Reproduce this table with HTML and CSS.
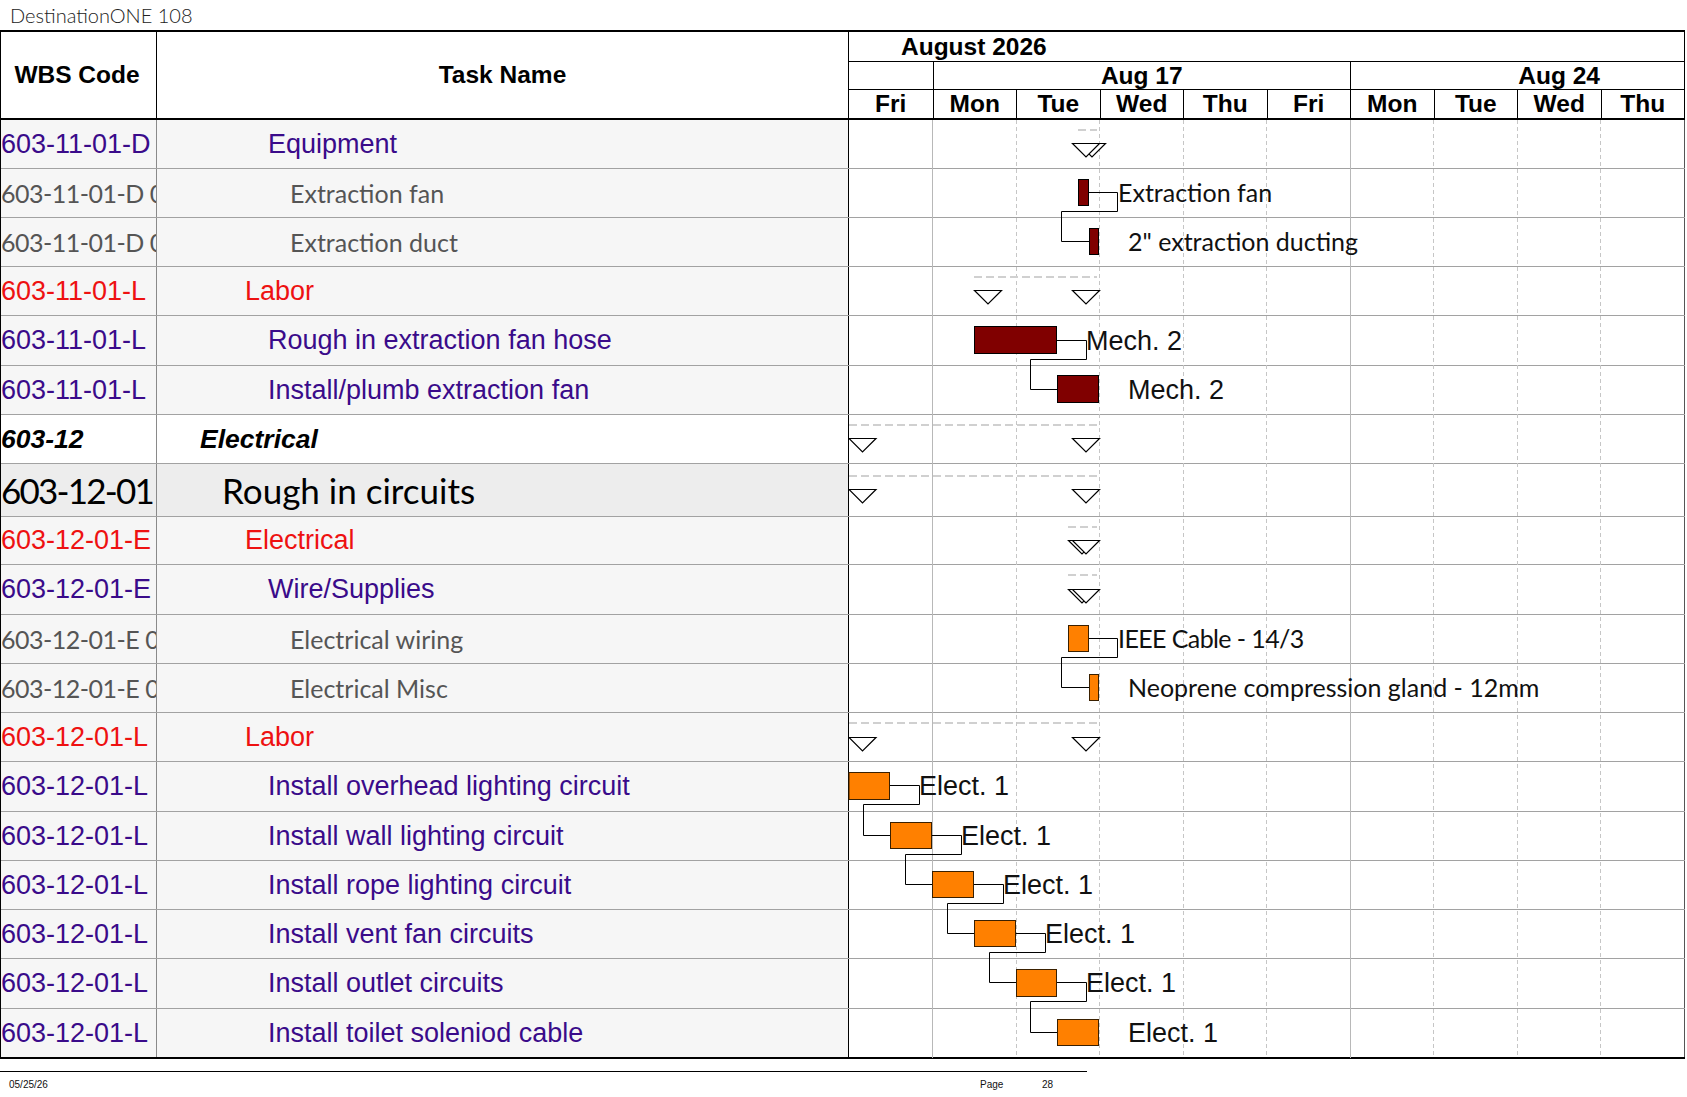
FILE: index.html
```html
<!DOCTYPE html>
<html lang="en">
<head>
<meta charset="utf-8">
<title>DestinationONE 108</title>
<link rel="stylesheet" href="styles.css">
</head>
<body>
<div class="title">DestinationONE 108</div>
<div class="sheet">
  <div class="head">
    <div class="h-wbs">WBS Code</div>
    <div class="h-task">Task Name</div>
    <div class="h-chart">
      <div class="h-month">August 2026</div>
      <div class="h-weeks">
        <div class="wk s1"></div>
        <div class="wk s5">Aug 17</div>
        <div class="wk s4 clip"><span>Aug 24</span></div>
      </div>
      <div class="h-days">
        <div class="day">Fri</div><div class="day">Mon</div><div class="day">Tue</div><div class="day">Wed</div><div class="day">Thu</div>
        <div class="day">Fri</div><div class="day">Mon</div><div class="day">Tue</div><div class="day">Wed</div><div class="day">Thu</div>
      </div>
    </div>
  </div>
  <div class="body">
    <div class="row"><div class="wbs t-blue">603-11-01-D</div><div class="task t-blue i4">Equipment</div><div class="gc"></div></div>
    <div class="row"><div class="wbs t-gray">603-11-01-D 01</div><div class="task t-gray i5">Extraction fan</div><div class="gc"></div></div>
    <div class="row"><div class="wbs t-gray">603-11-01-D 02</div><div class="task t-gray i5">Extraction duct</div><div class="gc"></div></div>
    <div class="row"><div class="wbs t-red">603-11-01-L</div><div class="task t-red i3">Labor</div><div class="gc"></div></div>
    <div class="row h50"><div class="wbs t-blue">603-11-01-L</div><div class="task t-blue i4">Rough in extraction fan hose</div><div class="gc"></div></div>
    <div class="row"><div class="wbs t-blue">603-11-01-L</div><div class="task t-blue i4">Install/plumb extraction fan</div><div class="gc"></div></div>
    <div class="row plain"><div class="wbs t-bold">603-12</div><div class="task t-bold i1">Electrical</div><div class="gc"></div></div>
    <div class="row ric"><div class="wbs t-big">603-12-01</div><div class="task t-big i2">Rough in circuits</div><div class="gc"></div></div>
    <div class="row h48"><div class="wbs t-red">603-12-01-E</div><div class="task t-red i3">Electrical</div><div class="gc"></div></div>
    <div class="row h50"><div class="wbs t-blue">603-12-01-E</div><div class="task t-blue i4">Wire/Supplies</div><div class="gc"></div></div>
    <div class="row"><div class="wbs t-gray">603-12-01-E 01</div><div class="task t-gray i5">Electrical wiring</div><div class="gc"></div></div>
    <div class="row"><div class="wbs t-gray">603-12-01-E 02</div><div class="task t-gray i5">Electrical Misc</div><div class="gc"></div></div>
    <div class="row"><div class="wbs t-red">603-12-01-L</div><div class="task t-red i3">Labor</div><div class="gc"></div></div>
    <div class="row h50"><div class="wbs t-blue">603-12-01-L</div><div class="task t-blue i4">Install overhead lighting circuit</div><div class="gc"></div></div>
    <div class="row"><div class="wbs t-blue">603-12-01-L</div><div class="task t-blue i4">Install wall lighting circuit</div><div class="gc"></div></div>
    <div class="row"><div class="wbs t-blue">603-12-01-L</div><div class="task t-blue i4">Install rope lighting circuit</div><div class="gc"></div></div>
    <div class="row"><div class="wbs t-blue">603-12-01-L</div><div class="task t-blue i4">Install vent fan circuits</div><div class="gc"></div></div>
    <div class="row h50"><div class="wbs t-blue">603-12-01-L</div><div class="task t-blue i4">Install outlet circuits</div><div class="gc"></div></div>
    <div class="row last"><div class="wbs t-blue">603-12-01-L</div><div class="task t-blue i4">Install toilet soleniod cable</div><div class="gc"></div></div>

    <svg class="gantt" viewBox="848 120 837 938" width="837" height="938" xmlns="http://www.w3.org/2000/svg">
      <g class="grid-week">
        <line x1="932.5" y1="120" x2="932.5" y2="1058"/>
        <line x1="1350.5" y1="120" x2="1350.5" y2="1058"/>
      </g>
      <g class="grid-day">
        <line x1="1016.5" y1="120" x2="1016.5" y2="1058"/>
        <line x1="1099.5" y1="120" x2="1099.5" y2="1058"/>
        <line x1="1183.5" y1="120" x2="1183.5" y2="1058"/>
        <line x1="1266.5" y1="120" x2="1266.5" y2="1058"/>
        <line x1="1433.5" y1="120" x2="1433.5" y2="1058"/>
        <line x1="1517.5" y1="120" x2="1517.5" y2="1058"/>
        <line x1="1600.5" y1="120" x2="1600.5" y2="1058"/>
      </g>

      <g class="sumline">
        <line x1="1078" y1="130" x2="1097" y2="130"/>
        <line x1="974" y1="277" x2="1097" y2="277"/>
        <line x1="849" y1="425" x2="1097" y2="425"/>
        <line x1="849" y1="476" x2="1097" y2="476"/>
        <line x1="1068" y1="527" x2="1097" y2="527"/>
        <line x1="1068" y1="575" x2="1097" y2="575"/>
        <line x1="849" y1="723" x2="1097" y2="723"/>
      </g>

      <g class="tri">
        <polygon points="1078.5,143.5 1105.5,143.5 1092,157"/>
        <polygon points="1072.5,143.5 1099.5,143.5 1086,157"/>
        <polygon points="974.5,290.5 1001.5,290.5 988,304"/>
        <polygon points="1072.5,290.5 1099.5,290.5 1086,304"/>
        <polygon points="849,438.5 876,438.5 862.5,452"/>
        <polygon points="1072.5,438.5 1099.5,438.5 1086,452"/>
        <polygon points="849,489.5 876,489.5 862.5,503"/>
        <polygon points="1072.5,489.5 1099.5,489.5 1086,503"/>
        <polygon points="1068.5,540.5 1095.5,540.5 1082,554"/>
        <polygon points="1072.5,540.5 1099.5,540.5 1086,554"/>
        <polygon points="1068.5,589.5 1095.5,589.5 1082,603"/>
        <polygon points="1072.5,589.5 1099.5,589.5 1086,603"/>
        <polygon points="849,737.5 876,737.5 862.5,751"/>
        <polygon points="1072.5,737.5 1099.5,737.5 1086,751"/>
      </g>

      <g class="link">
        <path d="M1089 192.5 H1117.5 V211.5 H1061.5 V241.5 H1089"/>
        <path d="M1057 340.5 H1086.5 V359.5 H1030.5 V389.5 H1057"/>
        <path d="M1089 638.5 H1117.5 V657.5 H1061.5 V687.5 H1089"/>
        <path d="M890 785.5 H919.5 V804.5 H863.5 V835.5 H890"/>
        <path d="M932 835.5 H961.5 V854.5 H905.5 V884.5 H932"/>
        <path d="M974 884.5 H1003.5 V903.5 H947.5 V933.5 H974"/>
        <path d="M1016 933.5 H1045.5 V952.5 H989.5 V982.5 H1016"/>
        <path d="M1057 982.5 H1086.5 V1001.5 H1030.5 V1032.5 H1057"/>
      </g>

      <g class="bar-mat">
        <rect x="1078.5" y="179.5" width="10" height="26"/>
        <rect x="1089.5" y="228.5" width="9" height="26"/>
        <rect x="974.5" y="326.5" width="82" height="27"/>
        <rect x="1057.5" y="375.5" width="41" height="27"/>
      </g>
      <g class="bar-el">
        <rect x="1068.5" y="625.5" width="20" height="26"/>
        <rect x="1089.5" y="674.5" width="9" height="26"/>
        <rect x="849" y="772.5" width="40.5" height="27"/>
        <rect x="890.5" y="822.5" width="41" height="26"/>
        <rect x="932.5" y="871.5" width="41" height="26"/>
        <rect x="974.5" y="920.5" width="41" height="26"/>
        <rect x="1016.5" y="969.5" width="40" height="27"/>
        <rect x="1057.5" y="1019.5" width="41" height="26"/>
      </g>

      <g class="lbl-c">
        <text x="1118" y="202">Extraction fan</text>
        <text x="1128" y="251">2" extraction ducting</text>
        <text x="1118" y="648" class="tight">IEEE Cable - 14/3</text>
        <text x="1128" y="697">Neoprene compression gland - 12mm</text>
      </g>
      <g class="lbl-a">
        <text x="1086" y="350">Mech. 2</text>
        <text x="1128" y="399">Mech. 2</text>
        <text x="919" y="795">Elect. 1</text>
        <text x="961" y="845">Elect. 1</text>
        <text x="1003" y="894">Elect. 1</text>
        <text x="1045" y="943">Elect. 1</text>
        <text x="1086" y="992">Elect. 1</text>
        <text x="1128" y="1042">Elect. 1</text>
      </g>
    </svg>
  </div>
</div>
<div class="footer">
  <span class="f-date">05/25/26</span>
  <span class="f-page">Page</span>
  <span class="f-num">28</span>
</div>
</body>
</html>
```

FILE: styles.css
```css
* { box-sizing: border-box; }

body {
  margin: 0;
  background: #ffffff;
  width: 1687px;
  height: 1097px;
  overflow: hidden;
}

.title {
  height: 30px;
  line-height: 30px;
  padding-left: 10px;
  font-family: "Lato", "Liberation Sans", sans-serif;
  font-weight: 300;
  font-size: 20px;
  color: #222222;
}

.sheet {
  width: 1685px;
  border-left: 1px solid #000;
  border-top: 2px solid #000;
  border-bottom: 2px solid #000;
}

/* ---------- header ---------- */
.head {
  display: grid;
  grid-template-columns: 156px 692px 836px;
  height: 88px;
  border-bottom: 2px solid #000;
  font-family: "Liberation Sans", Arial, sans-serif;
  font-weight: bold;
  font-size: 24.5px;
  color: #000;
}

.h-wbs,
.h-task {
  display: flex;
  align-items: center;
  justify-content: center;
  border-right: 1px solid #000;
}
.h-wbs { padding-right: 3px; }

.h-chart {
  display: grid;
  grid-template-rows: 30px 28px 28px;
  border-right: 1px solid #000;
}

.h-month {
  border-bottom: 1px solid #000;
  padding-left: 52px;
  line-height: 29px;
  white-space: nowrap;
}

.h-weeks,
.h-days {
  display: grid;
  grid-template-columns: repeat(10, 1fr);
}

.h-weeks { border-bottom: 1px solid #000; }

.wk {
  border-left: 1px solid #000;
  text-align: center;
  line-height: 27px;
  white-space: nowrap;
  overflow: hidden;
}
.wk:first-child { border-left: 0; }
.wk.s1 { grid-column: span 1; }
.wk.s5 { grid-column: span 5; }
.wk.s4 { grid-column: span 4; }
.wk.clip span {
  display: block;
  width: 125%;
  text-align: center;
}

.day {
  border-left: 1px solid #000;
  text-align: center;
  line-height: 28px;
}
.day:first-child { border-left: 0; }

/* ---------- body ---------- */
.body { position: relative; }

.row {
  display: grid;
  grid-template-columns: 156px 692px 836px;
  height: 49px;
  border-bottom: 1px solid #a2a2a2;
}
.row.h50 { height: 50px; }
.row.h48 { height: 48px; }
.row.ric { height: 53px; }
.row.last { height: 48px; border-bottom: 0; }

.wbs,
.task {
  display: flex;
  align-items: center;
  white-space: nowrap;
  overflow: hidden;
  background: #f6f6f6;
}
.wbs { border-right: 1px solid #8a8a8a; }
.task { border-right: 1px solid #000; }
.gc {
  background: #ffffff;
  border-right: 1px solid #555;
}

.row.plain .wbs,
.row.plain .task { background: #ffffff; }
.row.ric .wbs,
.row.ric .task { background: #ededed; }

.t-blue {
  font-family: "Liberation Sans", Arial, sans-serif;
  font-size: 27px;
  color: #3a0b8a;
}
.t-red {
  font-family: "Liberation Sans", Arial, sans-serif;
  font-size: 27px;
  color: #ee1111;
}
.t-gray {
  font-family: "Lato", "Liberation Sans", sans-serif;
  font-size: 25px;
  color: #555555;
}
.wbs.t-gray { letter-spacing: -0.5px; }
.t-bold {
  font-family: "Liberation Sans", Arial, sans-serif;
  font-size: 26.5px;
  font-weight: bold;
  font-style: italic;
  color: #000;
}
.t-big {
  font-family: "Lato", "Liberation Sans", sans-serif;
  font-size: 35px;
  color: #000;
}
.wbs.t-big { letter-spacing: -1.8px; }

.i1 { padding-left: 43px; }
.i2 { padding-left: 65px; }
.i3 { padding-left: 88px; }
.i4 { padding-left: 111px; }
.i5 { padding-left: 133px; }

/* ---------- gantt ---------- */
.gantt {
  position: absolute;
  left: 847px;
  top: 0;
  pointer-events: none;
}

.grid-week line { stroke: #b8b8b8; stroke-width: 1; }
.grid-day line { stroke: #c6c6c6; stroke-width: 1; stroke-dasharray: 4 3; }

.sumline line { stroke: #d0d0d0; stroke-width: 2; stroke-dasharray: 8 4; }

.tri polygon { fill: #ffffff; stroke: #000; stroke-width: 1.2; }

.link path { fill: none; stroke: #000; stroke-width: 1; }

.bar-mat rect { fill: #800000; stroke: #000; stroke-width: 1; }
.bar-el rect { fill: #ff8000; stroke: #3a2000; stroke-width: 1; }

.lbl-c text {
  font-family: "Lato", "Liberation Sans", sans-serif;
  font-size: 25px;
  fill: #111;
}
.lbl-c text.tight { letter-spacing: -0.6px; }
.lbl-a text {
  font-family: "Liberation Sans", Arial, sans-serif;
  font-size: 27px;
  fill: #111;
}

/* ---------- footer ---------- */
.footer {
  width: 1087px;
  margin-top: 12px;
  border-top: 1px solid #000;
  padding-top: 7px;
  display: flex;
  font-family: "Liberation Sans", Arial, sans-serif;
  font-size: 10px;
  line-height: 12px;
  color: #111;
}
.f-date { margin-left: 9px; width: 971px; }
.f-page { width: 62px; }
```
